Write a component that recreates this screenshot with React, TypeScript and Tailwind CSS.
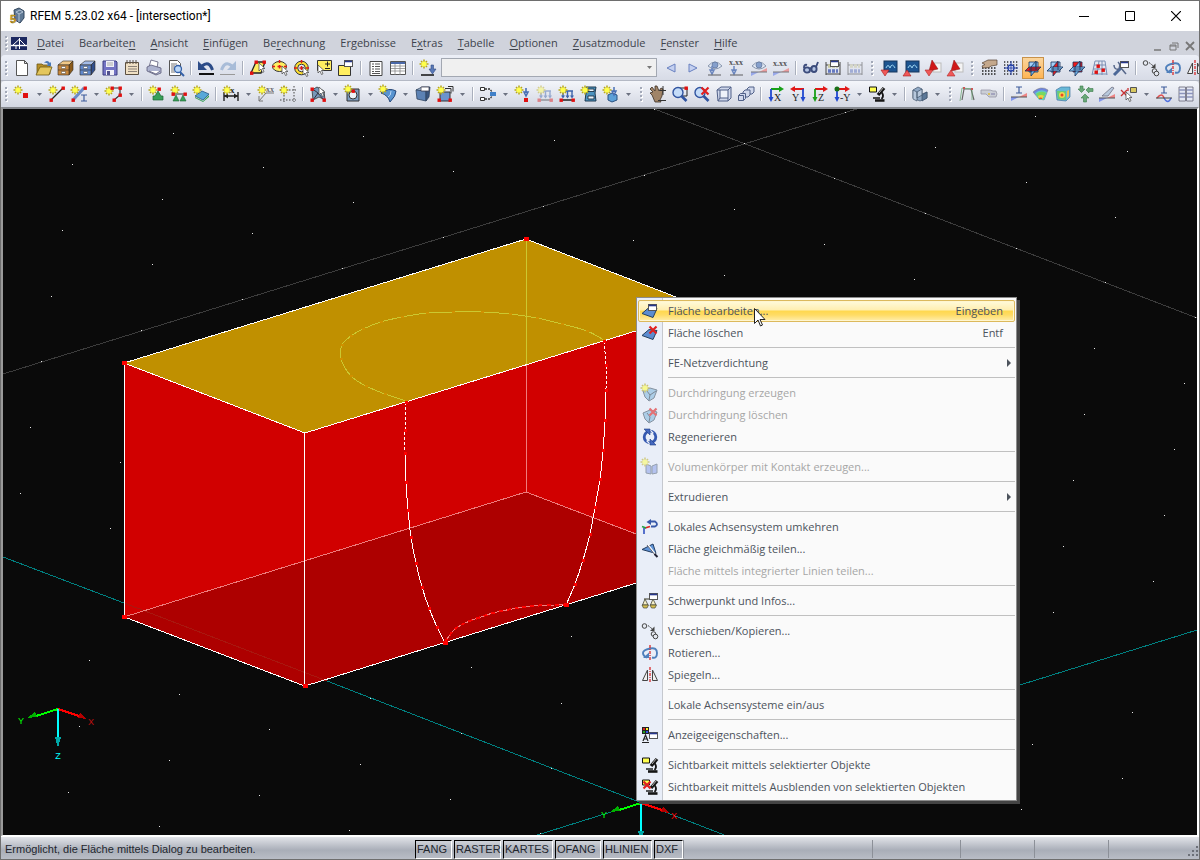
import { ReactNode } from 'react';

/* ---------- small drawing helpers shared by the 16x16 icons ---------- */

const Star = ({ x = 4, y = 4 }: { x?: number; y?: number }) => (
  <g>
    <path
      d={`M${x} ${y - 4.5}V${y + 4.5}M${x - 4.5} ${y}H${x + 4.5}M${x - 3} ${y - 3}L${x + 3} ${y + 3}M${x + 3} ${y - 3}L${x - 3} ${y + 3}`}
      stroke="#b8a818"
      strokeWidth="1.5"
    />
    <circle cx={x} cy={y} r="2.6" fill="#ffff4a" />
  </g>
);

const Dot = ({ x, y }: { x: number; y: number }) => (
  <rect x={x - 1.5} y={y - 1.5} width="3.4" height="3.4" fill="#e01010" />
);

const Pointer = ({ x = 8, y = 6 }: { x?: number; y?: number }) => (
  <path
    d={`M${x} ${y}v8l2-2 1.5 3.5 1.5-.7-1.5-3.3h2.5z`}
    fill="#fff"
    stroke="#444"
    strokeWidth=".7"
  />
);

const Win = ({ x = 7, y = 0 }: { x?: number; y?: number }) => (
  <g>
    <rect x={x + 0.5} y={y + 0.5} width="8" height="6" fill="#fff" stroke="#555" />
    <path d={`M${x + 1} ${y + 1.5}h7`} stroke="#27378c" strokeWidth="1.6" />
  </g>
);

const Glyph = ({ x, y, size = 7, children }: { x: number; y: number; size?: number; children: ReactNode }) => (
  <text x={x} y={y} fontSize={size} fontFamily="Liberation Serif, serif" fontWeight="bold" fill="#222">
    {children}
  </text>
);

const Drawer = ({ front, top, side }: { front: string; top: string; side: string }) => (
  <g stroke="#2f2a22" strokeWidth=".6">
    <path d="M0 5l5-4h10l-4 4z" fill={top} />
    <path d="M11 5l4-4v9l-4 5z" fill={side} />
    <path d="M0 5h11v10H0z" fill={front} />
    <path d="M0 10h11" />
    <path d="M3.500 6.500h4v2h-4zM3.500 11.500h4v2h-4z" fill="#fff" stroke="#444" strokeWidth=".5" />
  </g>
);

const Screen = ({ up }: { up?: boolean }) => (
  <g>
    <rect x="3" y="1" width="13" height="11" fill="#1c5490" stroke="#16365c" />
    <path d="M5 8q2-5 4 0M9 8q2-6 5 0" stroke="#9cd4f0" strokeWidth="1" />
    <path d={up ? 'M0 16l4-6 4 6z' : 'M0 10h8l-4 6z'} fill="#f05858" stroke="#a81c1c" strokeWidth=".6" />
  </g>
);

const Sail = ({ up }: { up?: boolean }) => (
  <g>
    <rect x="8" y="3" width="8" height="9" fill="#f4f4f4" stroke="#bbb" />
    <path d="M4 11L7 0l6 9z" fill="#d01818" stroke="#8c1010" strokeWidth=".5" />
    <path d={up ? 'M0 16l4-6 4 6z' : 'M0 10h8l-4 6z'} fill="#f05858" stroke="#b02828" strokeWidth=".6" />
  </g>
);

const Planes = ({ hot }: { hot: number }) => (
  <g stroke="#17335c" strokeWidth=".8">
    <path d="M4 2h9v10H4z" fill={hot === 2 ? '#f01818' : '#a4d0f8'} />
    <path d="M6 7l5-6v9l-5 6z" fill={hot === 1 ? '#f01818' : '#74b4ec'} />
    <path d="M0 11l4-4h12l-4 4z" fill={hot === 0 ? '#f01818' : '#8cc4f4'} />
    <path d="M6 7v5M4 9h10M11 2v8" />
  </g>
);

const Box3d = ({ fill = '#5c82b4', light = '#b8cce6' }: { fill?: string; light?: string }) => (
  <g stroke="#30445f" strokeWidth=".8">
    <path d="M1 4l6-3h8l-4 4z" fill={light} />
    <path d="M1 4l10 1v10l-9-2z" fill={fill} />
    <path d="M11 5l4-4-1 10-3 4z" fill="#38557f" />
  </g>
);

const Scope = () => (
  <g stroke="#151515">
    <path d="M15 2L9 9" strokeWidth="3.400" />
    <path d="M12.500 6q3 4 0 7" strokeWidth="1.800" />
    <path d="M6 14.500h9.500" strokeWidth="2.600" />
    <path d="M4 12h7" strokeWidth="1.400" />
    <path d="M14.500 1.500L10 7" stroke="#b4b4b4" strokeWidth="1" />
  </g>
);

const Cross = ({ x = 11, y = 4 }: { x?: number; y?: number }) => (
  <path
    d={`M${x - 3.5} ${y - 3.5}l7 7M${x + 3.5} ${y - 3.5}l-7 7`}
    stroke="#e02020"
    strokeWidth="2.2"
  />
);

const Ibeam = ({ x = 8, y = 1 }: { x?: number; y?: number }) => (
  <path d={`M${x - 3} ${y}h6M${x} ${y}v6M${x - 3} ${y + 6}h6`} stroke="#3e5c9c" strokeWidth="1.2" />
);

const Axes = ({ flip, label }: { flip?: boolean; label: string }) => (
  <g>
    <path d={flip ? 'M14 3H4' : 'M3 3h10'} stroke={label === 'X' ? '#18a018' : '#e01818'} strokeWidth="1.8" />
    <path
      d={flip ? 'M5 0L0 3l5 3z' : 'M11 0l5 3-5 3z'}
      fill={label === 'X' ? '#18a018' : '#e01818'}
    />
    <path
      d={flip ? 'M13 3v10' : 'M3 3v10'}
      stroke={label === 'Z' ? '#18a018' : '#2048d0'}
      strokeWidth="1.8"
    />
    <path
      d={flip ? 'M10.500 11h5L13 16z' : 'M.500 11h5L3 16z'}
      fill={label === 'Z' ? '#18a018' : '#2048d0'}
    />
    <text
      x={flip ? 2 : 6}
      y={15}
      fontSize={10}
      fontFamily="Liberation Serif, serif"
      fill="#222"
    >
      {label}
    </text>
  </g>
);

const Abacus = () => (
  <g>
    <path d="M1 2v13M15 2v13M1 5h14M1 14h14" stroke="#444" />
    <path d="M3 6h10" stroke="#c8c8a0" strokeWidth="3.400" strokeDasharray="3 1" />
    <path d="M3 11h10" stroke="#6478c0" strokeWidth="3.400" strokeDasharray="3 1" />
  </g>
);

const Eye = () => (
  <g>
    <path d="M1 6q7-8 14 0-7 6-14 0z" fill="#dfe8f4" stroke="#6d7d99" />
    <circle cx="8" cy="5" r="3" fill="#6688c0" stroke="#3c5684" strokeWidth=".8" />
  </g>
);

const Diagram = ({ y = 12 }: { y?: number }) => (
  <g>
    <path d={`M0 ${y + 4}L8 ${y}H0z`} fill="#8296ec" />
    <path d={`M8 ${y}L16 ${y - 4}V${y}z`} fill="#ee8484" />
    <path d={`M0 ${y}h16`} stroke="#555" />
  </g>
);

const Loads = () => (
  <g>
    <path d="M3 5h11M4 5v6M8.500 5v6M13 5v6" stroke="#3c64ac" strokeWidth="1.400" />
    <path d="M2 9.500h4l-2 3zM6.500 9.500h4l-2 3zM11 9.500h4l-2 3z" fill="#3c64ac" />
    <path d="M1 14h14" stroke="#222" strokeWidth="1.300" />
    <Dot x={2} y={14} />
    <Dot x={14} y={14} />
  </g>
);

const Support = ({ x = 8, y = 6 }: { x?: number; y?: number }) => (
  <path
    d={`M${x} ${y}l3 5h2v4H${x - 5}v-4h2z`}
    fill="#38a058"
    stroke="#1c6434"
    strokeWidth=".7"
  />
);

const Moving = () => (
  <g stroke="#444">
    <circle cx="2.500" cy="3" r="2.300" fill="#e4e8f0" />
    <circle cx="11.500" cy="11" r="2.300" fill="#e4e8f0" />
    <circle cx="13.500" cy="13.500" r="2.300" fill="#e4e8f0" />
    <path d="M6 2.500l5 4" strokeDasharray="2 1" />
    <path d="M12.500 3.500v4.500H8z" fill="#444" stroke="none" />
  </g>
);

const Rotating = () => (
  <g>
    <path d="M5 12.500Q1 11 1 8t7-4.500T15 8t-5 4.500" stroke="#5080bc" strokeWidth="1.900" />
    <path d="M1 13h6V7.500z" fill="#5080bc" />
    <path d="M8 0v16" stroke="#d81818" strokeWidth="1.200" strokeDasharray="3 1 1 1" />
  </g>
);

const Mirror = () => (
  <g>
    <path d="M5.500 3v10.500h-5zM10.500 3v10.500h5z" stroke="#444" fill="#f0f0f0" />
    <path d="M8 0v16" stroke="#d81818" strokeWidth="1.200" strokeDasharray="3 1 1 1" />
  </g>
);

const Slab = () => <path d="M0 10.500L7 4.500l8 1-4 9z" fill="#5c8cd0" stroke="#24405f" />;

const icons: Record<string, ReactNode> = {
  new: <path d="M2.500.5h8l3 3v12h-11zM10.500.5v3h3" fill="#fff" stroke="#555" />,
  open: (
    <g>
      <path d="M1 4h5l1 1h7v9H1z" fill="#b89028" stroke="#6c5814" strokeWidth=".8" />
      <path d="M0 15L4 7h12l-3 8z" fill="#e4c65c" stroke="#6c5814" strokeWidth=".8" />
      <path d="M8 3q3-4 6 0l1-1v4h-4l1-2q-2-2-4-1z" fill="#4878b8" />
    </g>
  ),
  drawerO: <Drawer front="#c8883c" top="#f0c888" side="#8c5c1c" />,
  drawerB: <Drawer front="#6088cc" top="#a4bce8" side="#304e8c" />,
  save: (
    <g>
      <path d="M1 1h13l1 1v13H1z" fill="#7474c4" stroke="#3c3c80" />
      <path d="M4 1h8v6H4zM4 10h8v5H4z" fill="#f0f0f8" />
      <path d="M5 3h6M5 5h6" stroke="#aaa" />
      <path d="M5 11h3v4H5z" fill="#50508c" />
    </g>
  ),
  note: (
    <g>
      <path d="M1.500 2.500h13v12h-13z" fill="#f0e0c4" stroke="#5c5040" />
      <path d="M3 0v4M6 0v4M9 0v4M12 0v4" stroke="#5c5248" />
      <path d="M4 6.500h9M4 9h9M4 11.500h9" stroke="#8c8278" />
    </g>
  ),
  print: (
    <g stroke="#5c5c78" strokeWidth=".8">
      <path d="M3 7L5 0l7 2-1 6z" fill="#fff" />
      <path d="M1 7l4-2 10 3v5l-5 2-9-4z" fill="#aeb4d0" />
      <path d="M3 11l7 3 4-3" fill="#fff" />
    </g>
  ),
  preview: (
    <g>
      <path d="M1.500.5h8l3 3v12h-11z" fill="#fff" stroke="#555" />
      <path d="M3 4h6M3 6h4M3 8h3M3 10h3M3 12h4" stroke="#777" />
      <circle cx="10" cy="9" r="3.500" fill="#bcd8f8" stroke="#3460a8" strokeWidth="1.300" />
      <path d="M12 12l4 4" stroke="#3460a8" strokeWidth="2" />
    </g>
  ),
  undo: (
    <g>
      <path d="M4 6Q11 0 14.500 10" stroke="#2c4c88" strokeWidth="3" />
      <path d="M0 1v9h9z" fill="#2c4c88" />
      <path d="M1 14h15" stroke="#111" strokeWidth="2" />
    </g>
  ),
  redo: (
    <g>
      <path d="M12 6Q5 0 1.500 10" stroke="#a8bcd8" strokeWidth="3" />
      <path d="M16 1v9H7z" fill="#a8bcd8" />
      <path d="M0 14.500h15" stroke="#999" strokeWidth="1" />
    </g>
  ),
  selSurface: (
    <g>
      <path d="M1 13L6 2h9l-4 11z" fill="#ffee60" stroke="#222" strokeWidth="1.300" />
      <Dot x={1.5} y={13} /><Dot x={6} y={2} /><Dot x={14} y={2} />
      <Pointer x={9} y={3} />
    </g>
  ),
  selEllipse: (
    <g>
      <ellipse cx="7.500" cy="6.500" rx="7" ry="5" fill="#ffee60" stroke="#333" />
      <path d="M7.500 0v3M0 6.500h3M7.500 5v3.500M5.500 6.500h4M12 6.500h3" stroke="#e01818" strokeWidth="1.500" />
      <Pointer x={10} y={6} />
    </g>
  ),
  selRing: (
    <g>
      <circle cx="7.500" cy="8" r="6.800" fill="#ffe030" stroke="#333" />
      <circle cx="7.500" cy="8" r="3.800" fill="#e8ecf4" stroke="#333" />
      <path d="M7.500 0v3M0 8h3M7.500 6v4M5.500 8h4M12 8h3" stroke="#e01818" strokeWidth="1.500" />
      <Pointer x={9} y={7} />
    </g>
  ),
  selPm: (
    <g>
      <path d="M1.500.5h14v10h-14z" fill="#ffee60" stroke="#333" />
      <path d="M9 4h5M11.500 1.500v5M9 8.500h5" stroke="#222" />
      <Pointer x={2} y={5} />
    </g>
  ),
  selWin: (
    <g>
      <path d="M.500 5.500h12v10H.500z" fill="#ffee60" stroke="#333" />
      <Win x={6} y={0} />
    </g>
  ),
  list: (
    <g>
      <path d="M2 1.500h12v14H2z" fill="#fff" stroke="#444" />
      <path d="M4 4h2M7 4h5M4 6.500h2M7 6.500h5M4 9h2M7 9h5M4 11.500h2M7 11.500h5M4 13.500h8" stroke="#555" />
    </g>
  ),
  table: (
    <g>
      <path d="M.500 1.500h15v13H.500z" fill="#fff" stroke="#555" />
      <path d="M1 3h14" stroke="#4a68a8" strokeWidth="2" />
      <path d="M1 6h14M1 8.500h14M1 11h14M5 4v11M10 4v11" stroke="#888" strokeWidth=".8" />
    </g>
  ),
  loadCase: (
    <g>
      <Star />
      <path d="M11 5h2.500v4H16l-3.500 5L9 9h2z" fill="#5878b8" stroke="#304c84" strokeWidth=".6" />
      <path d="M1 15h13" stroke="#111" strokeWidth="1.300" />
    </g>
  ),
  prev: <path d="M12 4v8L4 8z" fill="#c4d0f0" stroke="#6880c0" />,
  next: <path d="M4 4v8l8-4z" fill="#c4d0f0" stroke="#6880c0" />,
  eyeLoad: (
    <g opacity=".75">
      <Eye />
      <path d="M5 6v5M3 10l2 4 2-4z" stroke="#4468b0" strokeWidth="1.500" />
      <path d="M1 15h13" stroke="#333" />
    </g>
  ),
  xxLoad: (
    <g opacity=".75">
      <Glyph x={0} y={5} size={8}>x.xx</Glyph>
      <path d="M5 6v5M3 10l2 4 2-4z" stroke="#4468b0" strokeWidth="1.500" />
      <path d="M1 15h13" stroke="#333" />
    </g>
  ),
  eyeDiag: <g opacity=".75"><Eye /><Diagram /></g>,
  xxDiag: <g opacity=".75"><Glyph x={0} y={6} size={8}>x.xx</Glyph><Diagram /></g>,
  glasses: (
    <g stroke="#3c4c7c" strokeWidth="1.900">
      <ellipse cx="4" cy="10" rx="3" ry="2.600" fill="#b4c4e4" />
      <ellipse cx="11" cy="9" rx="2.600" ry="3" fill="#b4c4e4" />
      <path d="M7 8.500l2-1M1 8q0-4 3-3M13 7l2-5" />
    </g>
  ),
  abacusWin: <g><Abacus /><Win x={5} y={0} /></g>,
  abacus: <g opacity=".5"><Abacus /></g>,
  screenDown: <Screen />,
  screenUp: <Screen up />,
  sailDown: <Sail />,
  sailUp: <Sail up />,
  gridHand: (
    <g>
      <path d="M1 8h15M1 11h15M1 14h15" stroke="#222" strokeWidth="1.500" strokeDasharray="1.500 1.500" />
      <path d="M1 3l6-3h9v5l-6 1-2 1.500-6 .500-1-2 3-1.500z" fill="#c4a88c" stroke="#554030" strokeWidth=".7" />
    </g>
  ),
  gridSnap: (
    <g>
      <path d="M1 2h15M1 5h15M1 8h15M1 11h15M1 14h15" stroke="#333" strokeWidth="1.300" strokeDasharray="1.300 1.700" />
      <circle cx="8" cy="8" r="3" fill="#fff" stroke="#2440a8" strokeWidth="1.300" />
      <path d="M8 1v14M1 8h14" stroke="#2440a8" />
    </g>
  ),
  planeXY: <Planes hot={0} />,
  planeYZ: <Planes hot={1} />,
  planeXZ: <Planes hot={2} />,
  gridRed: (
    <g>
      <path d="M4 1l-3 14M8 1L6 15M11 1v14M14 1l2 14M4 1h10M3 5h12M2 9h13M1 14h15" stroke="#7c90b4" />
      <Dot x={7} y={6} /><Dot x={12} y={10} /><Dot x={5} y={12} />
    </g>
  ),
  tools: (
    <g>
      <path d="M1 15l7-7" stroke="#4c6898" strokeWidth="3" />
      <path d="M1 5q0 5 5 4M5 2q3 3 1 6" stroke="#56678a" strokeWidth="1.500" />
      <path d="M8 8l5 6" stroke="#56678a" strokeWidth="1.500" />
      <Win x={7} y={1} />
    </g>
  ),
  moving: <Moving />,
  rotating: <Rotating />,
  mirror: <Mirror />,

  /* second toolbar */
  node: <g><Star /><path d="M9 7h5v5H9z" fill="#e01010" /></g>,
  line: (
    <g>
      <path d="M2 14L14 2" stroke="#222" strokeWidth="1.300" />
      <Star /><Dot x={2} y={14} /><Dot x={14} y={2} />
    </g>
  ),
  member: (
    <g>
      <path d="M2 14L13 2" stroke="#6c8cc8" strokeWidth="3" />
      <Star /><Dot x={2} y={14} /><Dot x={14} y={2} />
      <Ibeam x={13} y={9} />
    </g>
  ),
  polyline: (
    <g>
      <path d="M5 2h9v7l-6 5" stroke="#333" strokeWidth="1.200" />
      <Star x={3} y={5} /><Dot x={6} y={2} /><Dot x={14} y={2} /><Dot x={14} y={9} /><Dot x={8} y={14} />
    </g>
  ),
  nodeSupport: <g><Support x={9} y={5} /><Star /><Dot x={10} y={3} /></g>,
  lineSupport: (
    <g>
      <path d="M2 8h12" stroke="#333" />
      <path d="M5 9l3 6H2zM12 9l3 6H9z" fill="#38a058" stroke="#1c6434" strokeWidth=".6" />
      <Star /><Dot x={2} y={8} /><Dot x={14} y={8} />
    </g>
  ),
  surfSupport: (
    <g>
      <path d="M2 10l7-5 7 3-6 6z" fill="#58a8d8" stroke="#285884" strokeWidth=".8" />
      <path d="M2 11l8 4 6-6v2l-6 5-8-4z" fill="#38a058" />
      <Star />
    </g>
  ),
  dim: (
    <g>
      <path d="M1 6v9M15 6v9M1 10h14" stroke="#222" strokeWidth="1.400" />
      <path d="M1 10l4-2.500v5zM15 10l-4-2.500v5z" fill="#222" />
      <Glyph x={7} y={7} size={9}>x</Glyph><Star />
    </g>
  ),
  note2: (
    <g>
      <path d="M16 7H8l-7 8M1 10v5h4" stroke="#777" />
      <text x={8} y={6} fontSize={8} fontFamily="Liberation Serif, serif" fill="#333">xx</text><Star />
    </g>
  ),
  guide: (
    <g>
      <path d="M4 0v16M14 0v16M0 4h16M0 14h16" stroke="#444" strokeDasharray="1.500 1.500" />
      <Star />
    </g>
  ),
  mesh: (
    <g>
      <path d="M2 4l5-3 7 4 1 9-6-3-6 3z" fill="#7898b8" stroke="#333" strokeWidth=".8" />
      <path d="M3 14L8 7l6 7M4 4l4 3" stroke="#334" />
      <Dot x={2} y={3} /><Dot x={2} y={14} /><Dot x={14} y={14} />
      <Pointer x={9} y={1} />
    </g>
  ),
  opening: (
    <g>
      <path d="M2 3h12v12H2z" fill="#7c9cc0" stroke="#333" />
      <circle cx="8" cy="9" r="4" fill="#eef2f8" stroke="#333" />
      <Dot x={8} y={5} /><Star x={3} y={3} />
    </g>
  ),
  shell: (
    <g>
      <path d="M1 7Q9 1 16 5q0 5-6 11Q8 9 1 7z" fill="#5894d0" stroke="#284878" />
      <path d="M11 5q0 5-3 6" stroke="#bcd8f4" />
      <Star x={3} y={3} />
    </g>
  ),
  solid: <g><Box3d /><path d="M6 1h8v4H6z" fill="#fff" stroke="#445" strokeWidth=".8" /></g>,
  solidNew: (
    <g>
      <path d="M3 6h10v9H3z" fill="#6c94cc" stroke="#333" />
      <path d="M8 2.500h6v5M11 .5h5v5" stroke="#333" />
      <Star /><Dot x={2} y={14} /><Dot x={13} y={14} />
    </g>
  ),
  joint: (
    <g>
      <path d="M.500 1.500h4v3h-4zM.500 11.500h4v3h-4z" fill="#fff" stroke="#333" />
      <path d="M5 3h5l2 3M5 13h5l2-3" stroke="#333" strokeWidth="1.300" strokeDasharray="2 1" />
      <path d="M10 6h6v4h-6z" fill="#4080c8" />
    </g>
  ),
  nodeLoad: (
    <g>
      <path d="M11 2v5M9 6l2 4 2-4z" stroke="#4a70b4" strokeWidth="1.600" />
      <Star /><path d="M9 12h4v4H9z" fill="#e01010" />
    </g>
  ),
  lineLoadOff: <g opacity=".45"><Loads /><Star /></g>,
  lineLoad: <g><Loads /><Star /></g>,
  surfLoad: (
    <g>
      <path d="M5 1h10l-1 6 1 8H4l1-8z" fill="#4c94c0" stroke="#1c3850" />
      <path d="M7 3h6v2.500H7zM7 10h6v3H7z" fill="#e8f4fc" stroke="#123" strokeWidth=".8" />
      <Star x={4} y={4} />
    </g>
  ),
  solidLoad: (
    <g>
      <path d="M5 9l4-2 5 2v5l-5 2-4-2z" fill="#5ca0d8" stroke="#285080" />
      <path d="M11 1v5M9 5l2 4 2-4z" stroke="#4a70b4" strokeWidth="1.500" />
      <Star />
    </g>
  ),
  pan: (
    <g>
      <path d="M0 3l2-2 3 4V0h2l2 5 2-3 2 1-1 7-2 4 1 2H5L2 9l-2-2 3-1z" fill="#a08468" stroke="#3c3024" strokeWidth=".8" />
      <path d="M13 0v9M9.500 4.500H16M8 14.500h8" stroke="#333" />
    </g>
  ),
  zoomWin: (
    <g>
      <path d="M7 2h8v8H7z" stroke="#222" />
      <circle cx="6" cy="6.500" r="5" fill="#c4dcf8" stroke="#3054a0" strokeWidth="1.400" />
      <path d="M9.500 10l5 5" stroke="#3054a0" strokeWidth="2.600" />
      <Dot x={14} y={2} />
    </g>
  ),
  zoomCross: (
    <g>
      <circle cx="6" cy="6.500" r="5" fill="#c4dcf8" stroke="#3054a0" strokeWidth="1.400" />
      <path d="M9.500 10l5 5" stroke="#3054a0" strokeWidth="2.600" />
      <Cross x={11} y={5} />
    </g>
  ),
  viewBox: (
    <g stroke="#506088">
      <path d="M1 4l4-3h10v11l-3 3H2z" fill="#d0d8ec" />
      <path d="M4 4h8v8H4zM1 4h3M12 4l3-3M12 12v3M4 12l-2 3" fill="#eef2fa" />
    </g>
  ),
  viewBoxes: (
    <g stroke="#506088" fill="#d0d8ec">
      <path d="M9 3l2-2h5v5l-2 2H9z" /><path d="M5 6l2-2h5v5l-2 2H5z" />
      <path d="M.500 9.500l2-2h5v5l-2 2h-5z" /><path d="M.500 9.500h5v5" />
    </g>
  ),
  axX: <Axes label="X" />,
  axY: <Axes label="Y" flip />,
  axZ: <Axes label="Z" />,
  axNY: <g><Axes label="-Y" /><circle cx="3" cy="3" r="2.500" fill="#187018" /></g>,
  scope: <g><Scope /><path d="M.5 1h7v5h-7z" fill="#ffff50" stroke="#111" /></g>,
  scopeX: <g><Scope /><path d="M.5 1h7v5h-7z" fill="#ffff50" stroke="#111" /><Cross x={5} y={6} /></g>,
  render: (
    <g stroke="#3c5068" strokeWidth=".7">
      <path d="M1 4l5-3 4 2v5l5-2v6l-7 3-7-3z" fill="#90a8c4" />
      <path d="M1 4l4 2v9l-4-2zM10 3L5 6v6l5-3z" fill="#b8c8dc" />
      <path d="M15 6l-5 3v6l5-3z" fill="#5c7898" />
    </g>
  ),
  frame: (
    <g>
      <path d="M3 14L5 3h7l3 11" stroke="#666" strokeWidth="1.200" />
      <path d="M1 15L3 2l10 1v11" stroke="#70a878" strokeWidth=".8" />
      <path d="M4 1h2v2H4zM12 2h2v2h-2z" fill="#c85858" />
    </g>
  ),
  capsule: (
    <g opacity=".7">
      <path d="M0 4h9l3 1h3q2 3 0 6H8L5 8H0z" fill="#c0c4cc" stroke="#778" strokeWidth=".8" />
      <path d="M7 8h2" stroke="#d4b020" strokeWidth="2" /><path d="M10 8h4" stroke="#88a" strokeWidth="2" />
    </g>
  ),
  beamDiag: <g><Ibeam x={8} y={1} /><Diagram y={11} /></g>,
  rainbow: (
    <g>
      <path d="M0 6q8-7 15-2l-4 10-5-1z" fill="#6c84e0" stroke="#777" strokeWidth=".5" />
      <path d="M2 7q6-5 12-1l-3 8H6z" fill="#60c8c8" /><path d="M3 8q5-4 10-1l-3 6H6z" fill="#78d860" />
      <path d="M5 10q3-2 6 0l-2 3H6z" fill="#f0d040" />
      <path d="M6 12q2-1 3 0v1H6z" fill="#e85030" />
    </g>
  ),
  rainbowBox: (
    <g>
      <path d="M1 4l5-3h9v10l-4 4-9-1z" fill="#68b8d8" stroke="#4478a0" strokeWidth=".7" />
      <path d="M2 5h9v9l-8-1z" fill="#68cc78" />
      <circle cx="7" cy="9" r="3" fill="#f0d850" /><circle cx="7" cy="9" r="1.500" fill="#e84828" />
      <path d="M12 5l2-1v6l-2 2z" fill="#e8c050" />
    </g>
  ),
  reactions: (
    <g fill="#68a878" stroke="#3c7c4c" strokeWidth=".6">
      <path d="M4 12l4-4 4 4H9.500v4h-3v-4z" /><path d="M3 0h3v3h2L4.500 6.500 1 3h2z" /><path d="M9 4l3-3v1.500h4v3h-4V7z" />
    </g>
  ),
  section: <g><path d="M3 10L13 1l2 1-6 8z" fill="#b8c8dc" stroke="#667" strokeWidth=".7" /><Diagram y={12} /></g>,
  pickResult: (
    <g>
      <path d="M9.500 1.500h6v5h-6z" fill="#d8c860" stroke="#555" />
      <path d="M0 4l6 6M6 4l-6 6M7 2v3" stroke="#c83030" strokeWidth="1.300" />
      <Pointer x={5} y={6} />
    </g>
  ),
  beamWave: (
    <g>
      <Ibeam x={8} y={1} />
      <path d="M1 12q5-6 7 0" stroke="#e05050" strokeWidth="1.500" /><path d="M8 12q4 7 7 0" stroke="#5070e0" strokeWidth="1.500" />
      <path d="M0 12h16" stroke="#444" />
    </g>
  ),
  panels: (
    <g>
      <path d="M1 1h6.500v14H1zM8.500 1H15v14H8.500z" fill="#e4e8f4" stroke="#667" strokeWidth=".8" />
      <path d="M1 4h6M1 7.500h6M1 11h6M9 4h6M9 7.500h6M9 11h6" stroke="#8c94bc" strokeWidth="1.300" />
    </g>
  ),

  /* context menu */
  surfEdit: <g><Slab /><Win x={6} y={1} /></g>,
  surfDelete: <g><Slab /><Cross x={11} y={5} /></g>,
  pierce: (
    <g opacity=".6">
      <path d="M1 6l7-3 7 2-3 8-5 3-4-4z" fill="#84b8dc" stroke="#456" />
      <path d="M5 6l3 4 6-4M8 10l-1 5" stroke="#345" /><Star x={3} y={3} />
    </g>
  ),
  pierceX: (
    <g opacity=".6">
      <path d="M1 6l7-3 7 2-3 8-5 3-4-4z" fill="#84b8dc" stroke="#456" />
      <path d="M5 6l3 4M8 10l-1 5" stroke="#345" /><Cross x={11} y={5} />
    </g>
  ),
  regen: (
    <g>
      <circle cx="8" cy="8" r="5.800" stroke="#3458b0" strokeWidth="2.800" />
      <path d="M7 0l4 4-3 2M9 16l-4-4 3-2" stroke="#e9eef8" strokeWidth="1.200" />
      <path d="M2 0h6v6zM14 16H8v-6z" fill="#4468c0" stroke="#203c84" strokeWidth=".6" />
    </g>
  ),
  contact: (
    <g opacity=".5">
      <path d="M4 5l5 2v8l-5-1zM10 7l5-2v9l-5 1z" fill="#8098e8" stroke="#456" /><Star x={3} y={3} />
    </g>
  ),
  reverse: (
    <g>
      <path d="M8 2.500h5q4 3 0 5H9" stroke="#3858a8" strokeWidth="1.800" /><path d="M9 0v6L4.500 3z" fill="#3858a8" />
      <path d="M2 15V9" stroke="#3050c0" strokeWidth="1.600" /><path d="M3 9l5-1.500" stroke="#e02020" strokeWidth="1.800" />
      <path d="M0 7.500l4 1.500" stroke="#20a040" strokeWidth="1.500" />
    </g>
  ),
  split: (
    <g>
      <path d="M0 8.500L11 3l3 9.500z" fill="#6094d8" stroke="#223c60" />
      <path d="M6 4l7 9" stroke="#fff" strokeWidth="1.800" /><path d="M5 4l9 11" stroke="#445" strokeWidth=".8" />
      <path d="M12.500 13l3 3" stroke="#223" strokeWidth="2" />
    </g>
  ),
  balance: (
    <g>
      <path d="M2 6h11" stroke="#554" strokeWidth="1.200" />
      <path d="M3 6l-2.500 6h5.500zM11 6l-2.500 6H14z" fill="#f4eec8" stroke="#443" strokeWidth=".8" />
      <path d="M0 12h6.500l-1.500 3H1.500zM8 12h6.500L13 15H9.500z" fill="#d8c050" stroke="#443" strokeWidth=".7" />
      <Win x={7} y={0} />
    </g>
  ),
  display: (
    <g>
      <path d="M0 0h7v7H0z" fill="#222" /><path d="M1 1h2v2H1z" fill="#e02020" /><path d="M4 1h2v2H4z" fill="#ffee30" />
      <path d="M1 4h2v2H1z" fill="#20a020" /><path d="M4 4h2v2H4z" fill="#3050e0" />
      <path d="M1 14l2.500-6L6 14M2 12h3M0 15.500h7" stroke="#222" strokeWidth="1.200" /><Win x={7} y={5} />
    </g>
  ),
};

const Icon = ({ name }: { name: string }) => (
  <svg viewBox="0 0 16 16" fill="none" className="h-4 w-4 overflow-visible" aria-hidden="true">
    {icons[name]}
  </svg>
);

/* ---------- toolbars: "|" separator, ":" grip, "name+" split button ---------- */

const fileTools =
  'new open drawerO drawerB save note print preview | undo redo | selSurface selEllipse selRing selPm selWin | list table | loadCase'.split(' ');
const resultTools =
  'prev next eyeLoad xxLoad eyeDiag xxDiag | glasses abacusWin abacus : screenDown screenUp sailDown sailUp : gridHand gridSnap planeXY planeYZ planeXZ gridRed tools | moving rotating mirror'.split(' ');
const modelTools =
  'node+ line member+ polyline+ | nodeSupport lineSupport surfSupport | dim+ note2 guide | mesh+ opening+ shell+ solid solidNew+ | joint+ nodeLoad lineLoadOff lineLoad surfLoad solidLoad+ : pan zoomWin zoomCross viewBox viewBoxes | axX axY axZ axNY+ scope+ | render+ : frame capsule | beamDiag rainbow rainbowBox reactions section pickResult+ beamWave panels'.split(' ');

const Grip = ({ className = 'w-3' }: { className?: string }) => (
  <span className={`${className} flex shrink-0 flex-col items-center gap-0.5 py-1`}>
    {[0, 1, 2, 3].map((i) => (
      <span key={i} className="h-0.5 w-0.5 bg-[#a3a9b8] shadow-[1px_1px_0_#fff]" />
    ))}
  </span>
);

const Tools = ({ items }: { items: string[] }) => (
  <>
    {items.map((item, i) => {
      if (item === '|') {
        return <span key={i} className="mx-[3px] h-3.5 w-0.5 shrink-0 border-l border-[#a9afbc] bg-white" />;
      }
      if (item === ':') return <Grip key={i} />;
      const name = item.replace('+', '');
      const active = name === 'planeXY';
      return (
        <span key={i} className="flex shrink-0">
          <button
            type="button"
            aria-label={name}
            className={
              active
                ? 'flex h-[22px] w-[22px] items-center justify-center border border-[#c8924a] bg-linear-to-b from-[#fbd59c] to-[#ffb552]'
                : 'flex h-[22px] w-[22px] items-center justify-center'
            }
          >
            <Icon name={name} />
          </button>
          {item.endsWith('+') && (
            <button type="button" aria-label={`${name} Optionen`} className="flex w-[13px] items-center justify-center">
              <svg viewBox="0 0 5 3" className="h-[3px] w-[5px]"><path d="M0 0h5L2.500 3z" fill="#6b7180" /></svg>
            </button>
          )}
        </span>
      );
    })}
  </>
);

/* ---------- menu bar ---------- */

const menus = [
  ['', 'D', 'atei'],
  ['Bearbeite', 'n', ''],
  ['', 'A', 'nsicht'],
  ['', 'E', 'infügen'],
  ['Be', 'r', 'echnung'],
  ['Er', 'g', 'ebnisse'],
  ['E', 'x', 'tras'],
  ['', 'T', 'abelle'],
  ['', 'O', 'ptionen'],
  ['', 'Z', 'usatzmodule'],
  ['', 'F', 'enster'],
  ['', 'H', 'ilfe'],
];

/* ---------- context menu ---------- */

type Entry = { label: string; icon?: string; keys?: string; off?: boolean; sub?: boolean; active?: boolean };

const groups: Entry[][] = [
  [
    { label: 'Fläche bearbeiten...', icon: 'surfEdit', keys: 'Eingeben', active: true },
    { label: 'Fläche löschen', icon: 'surfDelete', keys: 'Entf' },
  ],
  [{ label: 'FE-Netzverdichtung', sub: true }],
  [
    { label: 'Durchdringung erzeugen', icon: 'pierce', off: true },
    { label: 'Durchdringung löschen', icon: 'pierceX', off: true },
    { label: 'Regenerieren', icon: 'regen' },
  ],
  [{ label: 'Volumenkörper mit Kontakt erzeugen...', icon: 'contact', off: true }],
  [{ label: 'Extrudieren', sub: true }],
  [
    { label: 'Lokales Achsensystem umkehren', icon: 'reverse' },
    { label: 'Fläche gleichmäßig teilen...', icon: 'split' },
    { label: 'Fläche mittels integrierter Linien teilen...', off: true },
  ],
  [{ label: 'Schwerpunkt und Infos...', icon: 'balance' }],
  [
    { label: 'Verschieben/Kopieren...', icon: 'moving' },
    { label: 'Rotieren...', icon: 'rotating' },
    { label: 'Spiegeln...', icon: 'mirror' },
  ],
  [{ label: 'Lokale Achsensysteme ein/aus' }],
  [{ label: 'Anzeigeeigenschaften...', icon: 'display' }],
  [
    { label: 'Sichtbarkeit mittels selektierter Objekte', icon: 'scope' },
    { label: 'Sichtbarkeit mittels Ausblenden von selektierten Objekten', icon: 'scopeX' },
  ],
];

const MenuRow = ({ entry }: { entry: Entry }) => (
  <button
    type="button"
    role="menuitem"
    disabled={entry.off}
    className={
      entry.active
        ? 'flex h-[22px] w-full items-center rounded-xs border border-[#dcb95c] bg-[linear-gradient(#fffbdc,#ffeeb0_45%,#ffd84e_50%,#ffdc66_70%,#ffeeae)] text-left text-[#4c535c] shadow-[inset_0_0_0_1px_#fff6d0]'
        : entry.off
          ? 'flex h-[22px] w-full items-center border border-transparent text-left text-[#a6a6a6]'
          : 'flex h-[22px] w-full items-center border border-transparent text-left text-[#4c535c]'
    }
  >
    <span className="flex w-[29px] shrink-0 pl-[3px]">{entry.icon && <Icon name={entry.icon} />}</span>
    <span className="flex-1 whitespace-nowrap">{entry.label}</span>
    {entry.keys && <span className="pr-[11px]">{entry.keys}</span>}
    {entry.sub && (
      <svg viewBox="0 0 4 8" className="mr-[3px] h-2 w-1"><path d="M0 0l4 4-4 4z" fill="#4c535c" /></svg>
    )}
  </button>
);

const ContextMenu = () => (
  <div
    role="menu"
    className="absolute top-[188px] left-[633px] w-[381px] border border-[#8c8c8c] bg-[#fafafa] bg-[linear-gradient(to_right,#e9eef8_25px,#c5c8ce_25px,#c5c8ce_26px,#fafafa_26px)] px-px pt-0.5 pb-0.5 text-[11px] shadow-[3px_3px_0_#444]"
  >
    {groups.map((group, i) => (
      <div key={i}>
        {i > 0 && (
          <div className="flex h-2 items-start pt-[3px] pl-[30px]">
            <span className="h-px flex-1 bg-[#c0c0c0]" />
          </div>
        )}
        {group.map((entry) => (
          <MenuRow key={entry.label} entry={entry} />
        ))}
      </div>
    ))}
  </div>
);

/* ---------- model view ---------- */

const gridPoints = [
  [173, 133], [363, 136], [554, 140], [72, 164], [263, 167], [453, 171], [162, 199], [353, 202], [543, 206],
  [62, 230], [252, 233], [443, 237], [152, 264], [342, 268], [51, 296], [242, 299], [141, 330],
  [654, 109], [845, 112], [744, 143], [1035, 116], [935, 147], [1127, 151], [644, 175], [834, 178], [1026, 182],
  [734, 209], [925, 213], [1115, 217], [633, 240], [824, 244], [1016, 248], [724, 275], [914, 279], [1105, 282],
  [1195, 317], [1094, 348], [1184, 383], [1084, 414], [1174, 449], [1073, 480], [1164, 515], [1063, 546],
  [1153, 581], [1053, 612], [1132, 712], [1032, 744], [1122, 778], [1021, 809],
  [41, 361], [30, 427], [120, 462], [20, 493], [110, 528], [89, 660], [179, 694],
  [79, 726], [269, 729], [169, 760], [360, 764], [68, 792], [259, 795], [159, 826], [349, 830], [370, 698],
  [571, 636], [471, 667], [561, 703], [461, 733], [551, 768], [450, 799], [540, 833],
];

const topArc = [
  [406, 401], [385, 394], [366, 386], [351, 376], [341, 359], [342, 345], [351, 336], [363, 329], [381, 322],
  [402, 317], [427, 313], [453, 312], [482, 312], [510, 314], [537, 318], [562, 324], [587, 331], [604, 340],
];
const leftArc = [
  [406, 402], [405, 430], [405, 453], [406, 482], [408, 510], [411, 537], [416, 563], [422, 587], [429, 608],
  [437, 627], [445, 643],
];
const rightArc = [
  [604, 341], [606, 365], [606, 390], [605, 420], [603, 450], [600, 479], [595, 507], [590, 534], [583, 560],
  [575, 584], [566, 605],
];
const floorArc = [
  [445, 642], [453, 631], [463, 624], [478, 618], [493, 613], [512, 609], [532, 606], [555, 605], [566, 605],
];

// smooth curve through all points (Catmull-Rom as cubic segments)
const curve = (pts: number[][]) =>
  pts.slice(1).reduce((d, p, i) => {
    const a = pts[i];
    const before = pts[i - 1] ?? a;
    const after = pts[i + 2] ?? p;
    const c1 = [a[0] + (p[0] - before[0]) / 6, a[1] + (p[1] - before[1]) / 6];
    const c2 = [p[0] - (after[0] - a[0]) / 6, p[1] - (after[1] - a[1]) / 6];
    return `${d}C${c1.join(' ')} ${c2.join(' ')} ${p.join(' ')}`;
  }, `M${pts[0].join(' ')}`);

// global axes in the corner, the same cross again at the model origin
const Triad = ({ x, y, corner }: { x: number; y: number; corner?: boolean }) => (
  <g transform={`translate(${x} ${y})`} fontFamily="Liberation Sans, sans-serif" fontSize="9" textAnchor="middle">
    <path d="M0 0L-22 7" stroke="#00ff00" strokeWidth="2" />
    <path d="M-31 9l8-6 2 5z" fill="#00b000" />
    <path d="M0 0L21 7" stroke="#ff0000" strokeWidth="2" />
    <path d="M29 10l-7-6-2 5z" fill="#b40000" />
    <path d="M0 0V29" stroke="#00ffff" strokeWidth="2" />
    <path d="M-3 28h6l-3 11z" fill="#00a8a8" />
    <text x="-37" y="15" fill="#00ff00">Y</text>
    <text x="33" y="16" fill={corner ? '#c01010' : '#ff0000'}>X</text>
    {corner && <text x="0" y="50" fill="#00ffff">Z</text>}
  </g>
);

const ModelView = () => (
  <svg
    viewBox="3 109 1194 727"
    preserveAspectRatio="xMinYMin slice"
    shapeRendering="crispEdges"
    className="absolute inset-0 h-full w-full"
    fill="none"
    role="img"
    aria-label="Modell"
  >
    <path d="M3 374L860 108M652 108L1197 318" stroke="#3c3c3c" />
    <path d="M3 557L124 603M327 681L727 836M534 836L640 803L1197 630" stroke="#008080" />
    {gridPoints.map(([x, y]) => (
      <rect key={`${x}-${y}`} x={x} y={y} width="1" height="1" fill="#e8e8e8" />
    ))}

    <path d="M124 363L305 433L707 309V561L305 686L124 617z" fill="#d10000" />
    <path d="M124 617L526 492L707 561L305 686z" fill="#ad0000" />
    <path d="M124 363L526 239L707 309L305 433z" fill="#c09000" />

    <path d="M124 603L327 681" stroke="#a81810" />
    <path d="M526.500 239V365" stroke="#ccc830" />
    <path d="M526.500 365V492M124 617L526 492L707 561" stroke="#ee7c7c" />
    <path d="M124 363L526 239L707 309M124 363L305 433L707 309M124.500 363V617L304.500 686V433M305 686L707 561" stroke="#fff" />

    <path d={curve(topArc)} stroke="#ccc830" />
    <path d={curve(leftArc.slice(2))} stroke="#fff" />
    <path d={curve(leftArc.slice(0, 3))} stroke="#fff" strokeDasharray="3 2" />
    <path d={curve(rightArc.slice(2))} stroke="#fff" />
    <path d={curve(rightArc.slice(0, 3))} stroke="#fff" strokeDasharray="3 2" />
    <path d={curve(floorArc)} stroke="#f08080" />
    <path d={curve(floorArc)} stroke="#ff0000" strokeWidth="2" strokeDasharray="4 4" />

    {topArc.map(([x, y]) => (
      <rect key={`t${x}`} x={x - 1} y={y - 1} width="3" height="2" fill="#d09000" />
    ))}
    {[...leftArc, ...rightArc].map(([x, y]) => (
      <rect key={`${x}-${y}`} x={x - 1} y={y - 1} width="3" height="3" fill="#ff0000" />
    ))}
    {[[124, 363], [526, 239], [124, 617], [305, 686], [445, 643], [566, 605]].map(([x, y]) => (
      <rect key={`${x}-${y}`} x={x - 2} y={y - 2} width="5" height="4" fill="#ff0000" />
    ))}

    <Triad x={58} y={709} corner />
    <Triad x={641} y={803} />
  </svg>
);

/* ---------- status bar ---------- */

const toggles = [
  { label: 'FANG', width: 'w-[37px]' },
  { label: 'RASTER', width: 'w-[47px]' },
  { label: 'KARTES', width: 'w-[50px]' },
  { label: 'OFANG', width: 'w-[46px]' },
  { label: 'HLINIEN', width: 'w-[49px]' },
  { label: 'DXF', width: 'w-[29px]' },
];

const StatusBar = () => (
  <footer className="flex h-[23px] items-center border-t border-white bg-linear-to-b from-[#e2e4e9] via-[#a9aeb8] via-60% to-[#b9bdc6] pt-0.5 font-['Liberation_Sans',sans-serif] text-[11px] text-[#22262e]">
    <p className="w-[414px] shrink-0 truncate pl-1">Ermöglicht, die Fläche mittels Dialog zu bearbeiten.</p>
    <div className="flex shrink-0 gap-0.5">
      {toggles.map((t) => (
        <button
          key={t.label}
          type="button"
          className={`${t.width} flex h-[19px] items-center border border-t-black border-r-white border-b-white border-l-black pl-px`}
        >
          {t.label}
        </button>
      ))}
    </div>
    <div className="flex h-[18px] flex-1 justify-end border-l border-[#8c9098]">
      <span className="w-[88px] border-l border-[#8c9098]" />
      <span className="w-[74px] border-l border-[#8c9098]" />
      <span className="w-[74px] border-l border-[#8c9098]" />
      <span className="flex w-[91px] items-end justify-end border-l border-[#8c9098]">
        <svg viewBox="0 0 12 12" className="h-3 w-3" fill="#6c7078">
          <path d="M9 0h2v2H9zM5 4h2v2H5zM9 4h2v2H9zM1 8h2v2H1zM5 8h2v2H5zM9 8h2v2H9z" />
        </svg>
      </span>
    </div>
  </footer>
);

const App = () => (
  <div className="flex min-h-screen flex-col overflow-hidden border border-[#6e6e6e] bg-[#d0d3dc] font-['Open_Sans',sans-serif] text-[#3e434d]">
    {/* Title bar */}
    <header className="flex h-[30px] items-center bg-white pl-2 text-black">
      <svg viewBox="0 0 16 16" className="h-4 w-4 overflow-visible" fill="none">
        <path d="M5 2l5-2 5 3v7l-4 5-5-3z" fill="#5f7894" stroke="#33475e" />
        <path d="M7 4l4-2 3 2-4 2zM10 6v8" stroke="#b4c4d6" />
        <text x="1" y="15" fontSize="11" fontWeight="bold" fontFamily="Liberation Sans, sans-serif" fill="#e0b020" stroke="#6c5410" strokeWidth=".4">5</text>
      </svg>
      <h1 className="flex-1 pl-[5px] font-['Roboto',sans-serif] text-xs">RFEM 5.23.02 x64 - [intersection*]</h1>
      <button type="button" aria-label="Minimieren" className="flex w-[46px] justify-center">
        <svg viewBox="0 0 10 10" className="h-2.5 w-2.5"><path d="M0 5.500h10" stroke="#000" /></svg>
      </button>
      <button type="button" aria-label="Maximieren" className="flex w-[46px] justify-center">
        <svg viewBox="0 0 10 10" className="h-2.5 w-2.5" fill="none"><path d="M.5.5h9v9h-9z" stroke="#000" /></svg>
      </button>
      <button type="button" aria-label="Schließen" className="flex w-[46px] justify-center">
        <svg viewBox="0 0 10 10" className="h-2.5 w-2.5"><path d="M0 0l10 10M10 0L0 10" stroke="#000" strokeWidth="1.200" /></svg>
      </button>
    </header>

    {/* Menu bar */}
    <nav className="flex h-6 items-center text-[11px]">
      <Grip className="w-2.5" />
      <svg viewBox="0 0 16 13" className="mr-0.5 h-[13px] w-4 shrink-0" fill="none">
        <path d="M0 0h16v13H0z" fill="#1c2860" />
        <path d="M0 8.500h16" stroke="#fff" strokeWidth="1.400" />
        <path d="M8.500 1v11M8.500 2L2 8M9 3l5 5M5 9v3" stroke="#fff" />
      </svg>
      {menus.map(([before, key, after]) => (
        <button key={before + key + after} type="button" className="shrink-0 pr-[7px] pl-2">
          {before}
          <span className="underline underline-offset-2">{key}</span>
          {after}
        </button>
      ))}
      <span className="ml-auto flex items-center gap-1.5 self-end pr-1 pb-1">
        <button type="button" aria-label="Fenster minimieren"><svg viewBox="0 0 10 10" className="h-2.5 w-2.5"><path d="M1 9h7" stroke="#777" strokeWidth="1.500" /></svg></button>
        <button type="button" aria-label="Fenster wiederherstellen"><svg viewBox="0 0 10 10" className="h-2.5 w-2.5" fill="none"><path d="M3 2h6v5M1 4h6v5H1zM1 5h6" stroke="#777" /></svg></button>
        <button type="button" aria-label="Fenster schließen"><svg viewBox="0 0 10 10" className="h-2.5 w-2.5"><path d="M1 1l8 8M9 1L1 9" stroke="#777" strokeWidth="1.800" /></svg></button>
      </span>
    </nav>

    {/* Toolbars */}
    <div className="flex h-[26px] items-center overflow-hidden rounded-t-sm border-b border-[#b4b9c5] bg-linear-to-b from-[#eceff7] to-[#d7dbe6]">
      <Grip className="w-2.5" />
      <Tools items={fileTools} />
      <span className="relative mr-[3px] ml-0.5 flex shrink-0">
        <select aria-label="Lastfall" className="h-[19px] w-[216px] appearance-none border border-[#a3a8b2] bg-[#f0f0f0]" />
        <svg viewBox="0 0 5 3" className="pointer-events-none absolute top-2 right-[5px] h-[3px] w-[5px]">
          <path d="M0 0h5L2.500 3z" fill="#777" />
        </svg>
      </span>
      <Tools items={resultTools} />
    </div>
    <div className="flex h-[26px] items-center overflow-hidden rounded-t-sm bg-linear-to-b from-[#f4f6fb] to-[#d3d7e2]">
      <Grip className="w-2.5" />
      <Tools items={modelTools} />
    </div>

    {/* Work area */}
    <main className="relative flex min-h-[700px] flex-1 overflow-hidden border-t-2 border-r-2 border-b border-l-2 border-t-[#86898f] border-r-white border-b-white border-l-[#9a9a9a] bg-[#0a0a0a]">
      <ModelView />
      <ContextMenu />
      <svg viewBox="0 0 12 19" className="absolute top-[199px] left-[751px] h-[19px] w-3">
        <path d="M.5.5v15l3.500-3.500 2.500 6 2-1-2.500-5.500h5z" fill="#fff" stroke="#222" />
      </svg>
    </main>

    <StatusBar />
  </div>
);

export default App;
